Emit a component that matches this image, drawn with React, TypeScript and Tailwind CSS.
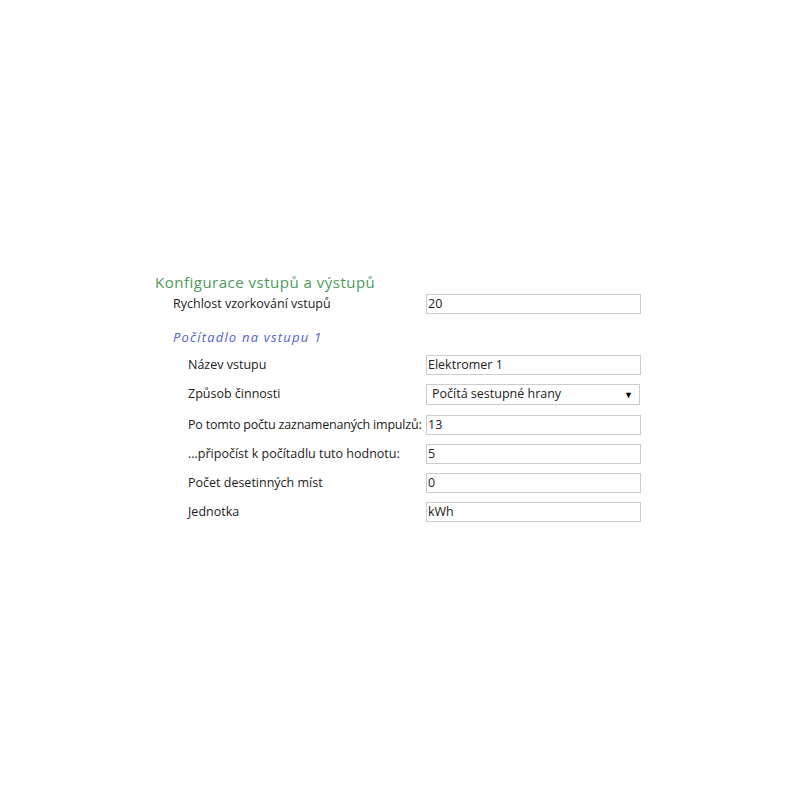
const font = { fontFamily: '"Open Sans", "Noto Sans", sans-serif' };

function Field({ value }: { value: string }) {
  return (
    <div className="w-[215px] h-[20px] border border-[#cccccc] bg-white flex items-center pl-[1px] text-[12.5px] text-[#222222]">
      {value}
    </div>
  );
}

function Row({ label, children, indent, tight }: { label: string; children: React.ReactNode; indent: boolean; tight?: boolean }) {
  return (
    <div className="flex items-center">
      <div
        className={
          (indent ? "w-[238px] " : "w-[253px] ") +
          (tight ? "tracking-[-0.2px] " : "") +
          "shrink-0 text-[12.5px] text-[#222222] whitespace-nowrap"
        }
      >
        {label}
      </div>
      {children}
    </div>
  );
}

export default function App() {
  return (
    <div className="w-[800px] h-[800px] bg-white pt-[271px] pl-[155px]" style={font}>
      <div className="text-[15px] leading-[22px] tracking-[0.5px] text-[#4c9a5b]">Konfigurace vstupů a výstupů</div>
      <div className="pl-[18px] mt-[1px]">
        <Row label="Rychlost vzorkování vstupů" indent={false}>
          <Field value="20" />
        </Row>
        <div className="mt-[14px] text-[13px] leading-[18px] italic tracking-[1.2px] text-[#5262c8]">Počítadlo na vstupu 1</div>
        <div className="pl-[15px] mt-[9px] flex flex-col">
          <Row label="Název vstupu" indent>
            <Field value="Elektromer 1" />
          </Row>
          <div className="mt-[9px]">
            <Row label="Způsob činnosti" indent>
              <div className="w-[214px] h-[21px] border border-[#cccccc] bg-white flex items-center justify-between pl-[5px] pr-[6px] text-[12.5px] text-[#222222]">
                <span>Počítá sestupné hrany</span>
                <span className="text-[9px] text-black">▼</span>
              </div>
            </Row>
          </div>
          <div className="mt-[10px]">
            <Row label="Po tomto počtu zaznamenaných impulzů:" indent tight>
              <Field value="13" />
            </Row>
          </div>
          <div className="mt-[9px]">
            <Row label="...připočíst k počítadlu tuto hodnotu:" indent>
              <Field value="5" />
            </Row>
          </div>
          <div className="mt-[9px]">
            <Row label="Počet desetinných míst" indent>
              <Field value="0" />
            </Row>
          </div>
          <div className="mt-[9px]">
            <Row label="Jednotka" indent>
              <Field value="kWh" />
            </Row>
          </div>
        </div>
      </div>
    </div>
  );
}
